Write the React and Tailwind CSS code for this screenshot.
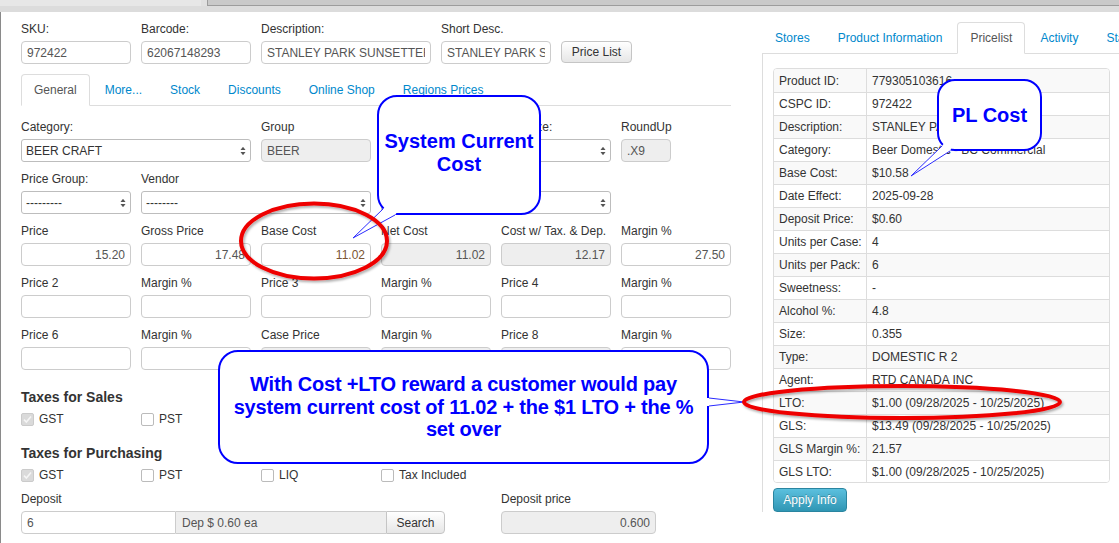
import React from "react";

function Arrows() {
  return (
    <svg width="6" height="10" viewBox="0 0 6 10" className="shrink-0">
      <polygon points="0.5,4 3,0.8 5.5,4" fill="#555" />
      <polygon points="0.5,6 3,9.2 5.5,6" fill="#555" />
    </svg>
  );
}

function Label({ children }) {
  return (
    <div className="h-[20px] leading-[16px] text-[12px] text-[#333] whitespace-nowrap">
      {children}
    </div>
  );
}

function Input({ value, right, disabled, w, color }) {
  return (
    <div
      className={`${w} shrink-0 h-[23px] border border-[#ccc] rounded-[4px] px-[5px] flex items-center text-[12px] ${
        disabled ? "bg-[#eee]" : "bg-white"
      } ${color || "text-[#555]"}`}
    >
      <span className={`block w-full overflow-hidden whitespace-nowrap ${right ? "text-right" : ""}`}>
        {value}
      </span>
    </div>
  );
}

function Select({ value, w }) {
  return (
    <div
      className={`${w} shrink-0 h-[23px] border border-[#bdbdbd] rounded-[3px] bg-white pl-[4px] pr-[4px] flex items-center justify-between text-[12px] text-[#333] whitespace-nowrap overflow-hidden`}
    >
      <span>{value}</span>
      <Arrows />
    </div>
  );
}

function Field({ label, children }) {
  return (
    <div className="flex flex-col">
      <Label>{label}</Label>
      {children}
    </div>
  );
}

function Check({ checked, label }) {
  return (
    <div className="w-[120px] flex items-center gap-[5px] h-[18px]">
      {checked ? (
        <div className="w-[13px] h-[13px] rounded-[2px] bg-[#dadada] border border-[#cbcbcb] flex items-center justify-center">
          <svg width="9" height="9" viewBox="0 0 9 9">
            <path d="M1 4.6 L3.4 7 L8 1.6" stroke="#f5f5f5" strokeWidth="1.6" fill="none" />
          </svg>
        </div>
      ) : (
        <div className="w-[13px] h-[13px] rounded-[2px] bg-white border border-[#bbb]" />
      )}
      <span className="text-[12px] text-[#333]">{label}</span>
    </div>
  );
}

const rows = [
  ["Product ID:", "779305103616"],
  ["CSPC ID:", "972422"],
  ["Description:", "STANLEY PARK SUNSETTER"],
  ["Category:", "Beer Domestic - BC Commercial"],
  ["Base Cost:", "$10.58"],
  ["Date Effect:", "2025-09-28"],
  ["Deposit Price:", "$0.60"],
  ["Units per Case:", "4"],
  ["Units per Pack:", "6"],
  ["Sweetness:", "-"],
  ["Alcohol %:", "4.8"],
  ["Size:", "0.355"],
  ["Type:", "DOMESTIC R 2"],
  ["Agent:", "RTD CANADA INC"],
  ["LTO:", "$1.00 (09/28/2025 - 10/25/2025)"],
  ["GLS:", "$13.49 (09/28/2025 - 10/25/2025)"],
  ["GLS Margin %:", "21.57"],
  ["GLS LTO:", "$1.00 (09/28/2025 - 10/25/2025)"],
];

export default function App() {
  return (
    <div className="relative w-[1119px] h-[543px] overflow-hidden bg-white font-['Liberation_Sans',Arial,sans-serif] text-[12px] text-[#333]">
      {/* top bar */}
      <div className="h-[12px] flex flex-col">
        <div className="h-[6px] flex">
          <div className="w-[201px] bg-[#e7e7e7]" />
          <div className="w-[6px] bg-[#e0e0e0]" />
          <div className="flex-1 bg-[#c9c9c9] border-l border-b border-[#9c9c9c]" />
        </div>
        <div className="h-[6px] bg-[#dcdcdc]" />
      </div>

      <div className="flex h-[531px] border-l border-[#8a8a8a]">
        {/* LEFT PANE */}
        <div className="w-[761px] shrink-0 pl-[20px] pt-[9px] flex flex-col">
          <div className="flex gap-[10px] items-end">
            <Field label="SKU:">
              <Input w="w-[110px]" value="972422" />
            </Field>
            <Field label="Barcode:">
              <Input w="w-[110px]" value="62067148293" />
            </Field>
            <Field label="Description:">
              <Input w="w-[170px]" value="STANLEY PARK SUNSETTER" />
            </Field>
            <Field label="Short Desc.">
              <Input w="w-[110px]" value="STANLEY PARK SUNSETTER" />
            </Field>
            <div className="w-[71px] h-[22px] mb-[1px] border border-[#c5c5c5] rounded-[4px] bg-linear-to-b from-white to-[#e6e6e6] flex items-center justify-center text-[12px] text-[#333]">
              Price List
            </div>
          </div>

          {/* tabs */}
          <div className="mt-[10px] w-[710px] h-[32px] flex border-b border-[#ddd] whitespace-nowrap">
            <div className="h-[32px] px-[12px] mr-[2px] border border-[#ddd] border-b-white rounded-t-[4px] bg-white flex items-center text-[#555]">
              General
            </div>
            {["More...", "Stock", "Discounts", "Online Shop", "Regions Prices"].map((t) => (
              <div key={t} className="h-[31px] px-[13px] mr-[2px] flex items-center text-[#0088cc]">
                {t}
              </div>
            ))}
          </div>

          {/* row 1 */}
          <div className="mt-[13px] flex gap-[10px]">
            <Field label="Category:">
              <Select w="w-[230px]" value="BEER CRAFT" />
            </Field>
            <Field label="Group">
              <Input w="w-[110px]" value="BEER" disabled />
            </Field>
            <Field label="Type:">
              <Select w="w-[110px]" value="" />
            </Field>
            <Field label="Unit Size:">
              <Select w="w-[110px]" value="" />
            </Field>
            <Field label="RoundUp">
              <Input w="w-[50px]" value=".X9" disabled />
            </Field>
          </div>

          {/* row 2 */}
          <div className="mt-[9px] flex gap-[10px]">
            <Field label="Price Group:">
              <Select w="w-[110px]" value="---------" />
            </Field>
            <Field label="Vendor">
              <Select w="w-[230px]" value="--------" />
            </Field>
            <Field label="Brand">
              <Select w="w-[110px]" value="" />
            </Field>
            <Field label="">
              <Select w="w-[110px]" value="" />
            </Field>
          </div>

          {/* row 3 */}
          <div className="mt-[9px] flex gap-[10px]">
            <Field label="Price">
              <Input w="w-[110px]" value="15.20" right />
            </Field>
            <Field label="Gross Price">
              <Input w="w-[110px]" value="17.48" right />
            </Field>
            <Field label="Base Cost">
              <Input w="w-[110px]" value="11.02" right color="text-[#7a5533]" />
            </Field>
            <Field label="Net Cost">
              <Input w="w-[110px]" value="11.02" right disabled />
            </Field>
            <Field label="Cost w/ Tax. & Dep.">
              <Input w="w-[110px]" value="12.17" right disabled />
            </Field>
            <Field label="Margin %">
              <Input w="w-[110px]" value="27.50" right />
            </Field>
          </div>

          {/* row 4 */}
          <div className="mt-[9px] flex gap-[10px]">
            {["Price 2", "Margin %", "Price 3", "Margin %", "Price 4", "Margin %"].map((l, i) => (
              <Field key={i} label={l}>
                <Input w="w-[110px]" value="" />
              </Field>
            ))}
          </div>

          {/* row 5 */}
          <div className="mt-[9px] flex gap-[10px]">
            <Field label="Price 6">
              <Input w="w-[110px]" value="" />
            </Field>
            <Field label="Margin %">
              <Input w="w-[110px]" value="" />
            </Field>
            <Field label="Case Price">
              <Input w="w-[110px]" value="" disabled />
            </Field>
            <Field label="Margin %">
              <Input w="w-[110px]" value="" disabled />
            </Field>
            <Field label="Price 8">
              <Input w="w-[110px]" value="" disabled />
            </Field>
            <Field label="Margin %">
              <Input w="w-[110px]" value="" />
            </Field>
          </div>

          <div className="mt-[17px] h-[20px] leading-[20px] text-[14px] font-bold text-[#333]">
            Taxes for Sales
          </div>
          <div className="mt-[3px] flex">
            <Check checked label="GST" />
            <Check label="PST" />
          </div>

          <div className="mt-[15px] h-[20px] leading-[20px] text-[14px] font-bold text-[#333]">
            Taxes for Purchasing
          </div>
          <div className="mt-[3px] flex">
            <Check checked label="GST" />
            <Check label="PST" />
            <Check label="LIQ" />
            <Check label="Tax Included" />
          </div>

          <div className="mt-[7px] flex gap-[56px]">
            <div className="flex flex-col">
              <div className="h-[20px] leading-[16px] text-[12px] text-[#333]">Deposit</div>
              <div className="flex h-[23px]">
                <div className="w-[155px] h-[23px] border border-[#ccc] rounded-l-[4px] bg-white px-[5px] flex items-center text-[#555]">
                  6
                </div>
                <div className="w-[210px] h-[23px] border-y border-[#ccc] bg-[#eee] px-[6px] flex items-center text-[#555]">
                  Dep $ 0.60 ea
                </div>
                <div className="w-[59px] h-[23px] border border-[#c5c5c5] rounded-r-[4px] bg-linear-to-b from-white to-[#e6e6e6] flex items-center justify-center text-[#333]">
                  Search
                </div>
              </div>
            </div>
            <div className="flex flex-col">
              <div className="h-[20px] leading-[16px] text-[12px] text-[#333]">Deposit price</div>
              <Input w="w-[155px]" value="0.600" right disabled />
            </div>
          </div>
        </div>

        {/* RIGHT PANE */}
        <div className="flex-1 flex flex-col pt-[10px]">
          <div className="h-[32px] flex border-b border-[#ddd] whitespace-nowrap">
            {["Stores", "Product Information"].map((t) => (
              <div key={t} className="h-[31px] px-[13px] mr-[2px] flex items-center text-[#0088cc]">
                {t}
              </div>
            ))}
            <div className="h-[32px] px-[12px] mr-[2px] border border-[#ddd] border-b-white rounded-t-[4px] bg-white flex items-center text-[#555]">
              Pricelist
            </div>
            {["Activity", "Stats"].map((t) => (
              <div key={t} className="h-[31px] px-[13px] mr-[2px] flex items-center text-[#0088cc]">
                {t}
              </div>
            ))}
          </div>
          <div className="h-[458px] border-l border-[#ddd] pl-[10px] pt-[14px] flex flex-col">
            <div className="w-[337px] border border-[#ddd] rounded-[4px] overflow-hidden">
              {rows.map(([k, v], i) => (
                <div
                  key={k}
                  className={`flex h-[23px] ${i > 0 ? "border-t border-[#ddd]" : ""} ${
                    i % 2 === 0 ? "bg-[#f9f9f9]" : "bg-white"
                  }`}
                >
                  <div className="w-[93px] shrink-0 border-r border-[#ddd] pl-[5px] flex items-center whitespace-nowrap text-[#333]">
                    {k}
                  </div>
                  <div className="flex-1 pl-[5px] flex items-center whitespace-nowrap overflow-hidden text-[#333]">
                    {v}
                  </div>
                </div>
              ))}
            </div>
            <div className="mt-[5px] w-[74px] h-[24px] rounded-[4px] border border-[#2a85a0] bg-linear-to-b from-[#5bc0de] to-[#2f96b4] flex items-center justify-center text-white text-[12px] [text-shadow:0_-1px_0_rgba(0,0,0,0.25)]">
              Apply Info
            </div>
          </div>
        </div>
      </div>

      {/* callouts */}
      <div className="absolute left-[377px] top-[95px] w-[164px] h-[120px] border-2 border-[#0000ff] rounded-[20px] bg-white flex items-center justify-center pb-[5px] text-center font-bold text-[20px] leading-[23px] text-[#0000ff]">
        <div>
          System Current
          <br />
          Cost
        </div>
      </div>
      <div className="absolute left-[937px] top-[79px] w-[105px] h-[72px] border-2 border-[#0000ff] rounded-[18px] bg-white flex items-center justify-center text-center font-bold text-[20px] leading-[23px] text-[#0000ff]">
        PL Cost
      </div>
      <div className="absolute left-[218px] top-[350px] w-[491px] h-[114px] border-2 border-[#0000ff] rounded-[20px] bg-white flex items-center justify-center text-center font-bold text-[20px] leading-[22.5px] tracking-[-0.2px] text-[#0000ff]">
        <div>
          With Cost +LTO reward a customer would pay
          <br />
          system current cost of 11.02 + the $1 LTO + the %
          <br />
          set over
        </div>
      </div>

      <svg
        className="absolute left-0 top-0 pointer-events-none"
        width="1119"
        height="543"
        viewBox="0 0 1119 543"
      >
        <defs>
          <filter id="sh" x="-20%" y="-40%" width="140%" height="180%">
            <feDropShadow dx="1.5" dy="2" stdDeviation="1.2" floodColor="#000" floodOpacity="0.3" />
          </filter>
        </defs>
        {/* tail 1 */}
        <polygon points="386,206 383,209 353,238 395,215 398,211" fill="#fff" />
        <line x1="383" y1="209" x2="353" y2="238" stroke="#2b2bff" strokeWidth="1" />
        <line x1="395" y1="215" x2="353" y2="238" stroke="#2b2bff" strokeWidth="1" />
        {/* tail 2 */}
        <polygon points="945,142 942,146 911,176 950,151 952,147" fill="#fff" />
        <line x1="942" y1="146" x2="911" y2="176" stroke="#2b2bff" strokeWidth="1" />
        <line x1="950" y1="151" x2="911" y2="176" stroke="#2b2bff" strokeWidth="1" />
        {/* tail 3 */}
        <polygon points="705,398 709,398 744,402 709,406 705,406" fill="#fff" />
        <line x1="709" y1="398" x2="744" y2="402" stroke="#2b2bff" strokeWidth="1" />
        <line x1="709" y1="406" x2="744" y2="402" stroke="#2b2bff" strokeWidth="1" />
        {/* ellipses */}
        <ellipse cx="314" cy="241" rx="73" ry="37.5" fill="none" stroke="#ee0000" strokeWidth="4" filter="url(#sh)" />
        <ellipse cx="902" cy="402" rx="158" ry="16" fill="none" stroke="#ee0000" strokeWidth="4" filter="url(#sh)" />
      </svg>
    </div>
  );
}
